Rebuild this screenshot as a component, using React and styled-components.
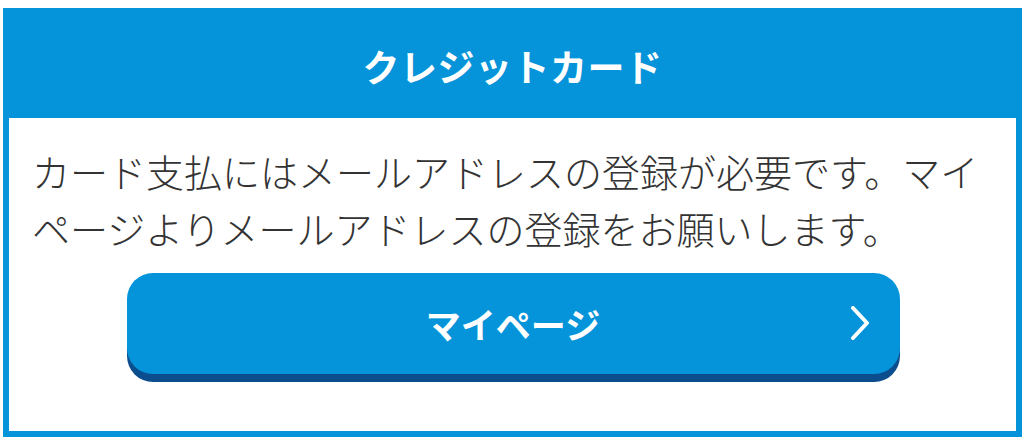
import React from "react";
import styled, { createGlobalStyle } from "styled-components";

const Global = createGlobalStyle`
  html, body { margin: 0; padding: 0; background: #ffffff; }
  body { font-family: "Noto Sans CJK JP", "Noto Sans", sans-serif; }
`;

const BLUE = "#0594da";

const Page = styled.div`
  padding: 8px 2px 6px 3px;
`;

const Card = styled.section`
  border: 6px solid ${BLUE};
  background: #ffffff;
  display: flex;
  flex-direction: column;
`;

const Header = styled.h2`
  margin: 0;
  height: 104px;
  background: ${BLUE};
  color: #ffffff;
  font-size: 37px;
  font-weight: 700;
  letter-spacing: 0.5px;
  display: flex;
  align-items: center;
  justify-content: center;
`;

const Body = styled.div`
  padding: 24px 22px 57px 23px;
  display: flex;
  flex-direction: column;
  align-items: center;
`;

const Message = styled.p`
  margin: 0;
  align-self: stretch;
  font-size: 38px;
  line-height: 57px;
  color: #333333;
  font-weight: 300;
`;

const Button = styled.a`
  margin-top: 17px;
  width: 773px;
  height: 101px;
  box-sizing: border-box;
  border-radius: 26px;
  background: ${BLUE};
  box-shadow: 0 8px 0 #0c4e8d;
  color: #ffffff;
  font-size: 35px;
  font-weight: 700;
  display: flex;
  align-items: center;
  justify-content: center;
  position: relative;
  text-decoration: none;
`;

const Chevron = styled.svg`
  position: absolute;
  right: 29px;
  top: 33px;
  width: 22px;
  height: 34px;
`;

export default function App() {
  return (
    <>
      <Global />
      <Page>
        <Card>
          <Header>クレジットカード</Header>
          <Body>
            <Message>
              カード支払にはメールアドレスの登録が必要です。マイページよりメールアドレスの登録をお願いします。
            </Message>
            <Button href="#">
              マイページ
              <Chevron viewBox="0 0 22 34" fill="none">
                <path
                  d="M4 2 L18 17 L4 32"
                  stroke="#ffffff"
                  strokeWidth="4"
                  strokeLinecap="round"
                  strokeLinejoin="round"
                />
              </Chevron>
            </Button>
          </Body>
        </Card>
      </Page>
    </>
  );
}
